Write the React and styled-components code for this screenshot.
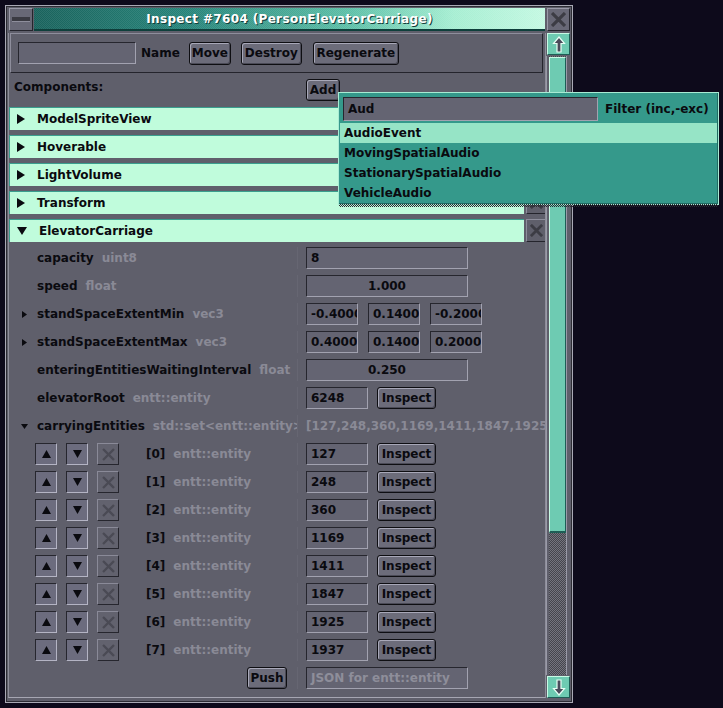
import React from 'react';
import styled, { createGlobalStyle } from 'styled-components';

const Global = createGlobalStyle`
  html, body { margin: 0; padding: 0; background: #0d0a1b; }
  body {
    font-family: "DejaVu Sans", "Liberation Sans", sans-serif;
    font-weight: bold;
    font-size: 12px;
    color: #0a0a0f;
  }
  * { box-sizing: border-box; }
`;

const Page = styled.div`
  position: relative;
  width: 723px;
  height: 708px;
  padding: 5px 0 0 5px;
`;

const Window = styled.div`
  width: 568px;
  height: 698px;
  background: #5f5f6b;
  border: 1px solid #a9a9b5;
  box-shadow: inset 0 0 0 1px #2c2c34;
  padding: 2px 2px 0 2px;
  display: flex;
  flex-direction: column;
`;

const TitleRow = styled.div`
  display: flex;
  height: 23px;
  margin-left: 1px;
`;

const FrameButton = styled.div`
  flex: 0 0 ${p => p.$w}px;
  margin-left: ${p => p.$ml || 0}px;
  height: 23px;
  background: #686876;
  border: 1px solid;
  border-color: #9a9aa8 #24242c #24242c #9a9aa8;
  display: flex;
  align-items: center;
  justify-content: center;
`;

const TitleBar = styled.div`
  flex: 0 0 511px;
  margin-left: 1px;
  height: 23px;
  display: flex;
  align-items: center;
  justify-content: center;
  color: #ffffff;
  letter-spacing: 0.35px;
  border-bottom: 2px solid #0e3f3b;
  text-shadow: 1px 1px 0 #123f3b;
  background:
    repeating-conic-gradient(rgba(255,255,255,0.08) 0 25%, transparent 0 50%) 0 0 / 2px 2px,
    linear-gradient(90deg, #19625c 0%, #27847a 30%, #5ec0a8 62%, #a6eed2 82%, #c4f8e2 100%);
`;

const Body = styled.div`
  display: flex;
  height: 665px;
  margin-top: 2px;
`;

const Main = styled.div`
  width: 538px;
  height: 665px;
  border-left: 1px solid #8e8e9a;
  border-right: 1px solid #8e8e9a;
  border-bottom: 1px solid #a6a6b2;
  overflow: hidden;
  display: flex;
  flex-direction: column;
`;

const Toolbar = styled.div`
  margin: 0 2px 0 1px;
  height: 40px;
  flex: 0 0 40px;
  display: flex;
  align-items: center;
  padding: 0 7px;
  border: 1px solid;
  border-color: #8e8e9c #24242c #24242c #8e8e9c;
`;

const TextInput = styled.div`
  flex: 0 0 ${p => p.$w}px;
  width: ${p => p.$w}px;
  height: ${p => p.$h || 22}px;
  background: #646472;
  border: 1px solid;
  border-color: #26262e #a2a2b0 #a2a2b0 #26262e;
  padding: 0 4px;
  line-height: ${p => (p.$h || 22) - 2}px;
  text-align: ${p => p.$align || 'left'};
  color: ${p => (p.$placeholder ? '#8e8e9a' : '#0a0a0f')};
  white-space: nowrap;
  overflow: hidden;
`;

const Label = styled.span`
  margin: 0 ${p => p.$mr || 0}px 0 ${p => p.$ml || 0}px;
  white-space: nowrap;
`;

const Button = styled.div`
  flex: 0 0 ${p => p.$w}px;
  width: ${p => p.$w}px;
  height: ${p => p.$h || 23}px;
  margin-left: ${p => p.$ml || 0}px;
  background: #6c6c7a;
  border: 1px solid #0e0e12;
  border-radius: 3px;
  box-shadow: inset 1px 1px 0 #a8a8b8, inset -1px -1px 0 #4a4a56;
  display: flex;
  align-items: center;
  justify-content: center;
  white-space: nowrap;
`;

const ComponentsRow = styled.div`
  display: grid;
  grid-template-columns: 297px auto;
  height: 34px;
  flex: 0 0 34px;
  padding-top: 6px;
  align-items: start;
`;

const SectionLabel = styled.div`
  padding-left: 5px;
  line-height: 16px;
`;

const ComponentList = styled.div`
  display: flex;
  flex-direction: column;
  gap: 5px;
`;

const CompRow = styled.div`
  display: flex;
  gap: 2px;
  height: 23px;
`;

const CompHeader = styled.div`
  flex: 0 0 515px;
  height: 23px;
  background: #c0fcdc;
  border-top: 1px solid #3a9e8e;
  border-left: 1px solid #3a9e8e;
  display: flex;
  align-items: center;
  padding-left: 7px;
  gap: 12px;
`;

const RemoveButton = styled.div`
  flex: 0 0 20px;
  height: 23px;
  background: #5f5f6b;
  border: 1px solid;
  border-color: #8e8e9c #24242c #24242c #8e8e9c;
  display: flex;
  align-items: center;
  justify-content: center;
`;

const Fields = styled.div`
  display: flex;
  flex-direction: column;
  gap: 6px;
`;

const FieldRow = styled.div`
  display: grid;
  grid-template-columns: 289px 1fr;
  height: 22px;
`;

const LabelCell = styled.div`
  display: flex;
  align-items: center;
  overflow: hidden;
  white-space: nowrap;
  padding-left: ${p => p.$pl || 0}px;
  padding-right: ${p => p.$pr || 0}px;
  justify-content: ${p => p.$end ? 'flex-end' : 'flex-start'};
  border-right: 1px solid #666672;
  height: 22px;
`;

const CaretSlot = styled.div`
  flex: 0 0 28px;
  display: flex;
  justify-content: flex-end;
  padding-right: ${p => p.$down ? 9 : 10}px;
`;

const TypeName = styled.span`
  color: #8a8a96;
  margin-left: ${p => p.$ml ?? 8}px;
`;

const ValueCell = styled.div`
  display: flex;
  align-items: center;
  gap: ${p => p.$gap ?? 10}px;
  padding-left: 8px;
  white-space: nowrap;
  overflow: hidden;
`;

const GrayText = styled.span`
  color: #8a8a96;
`;

const SmallButton = styled.div`
  flex: 0 0 22px;
  height: 22px;
  background: ${p => p.$disabled ? '#62626e' : '#6c6c7e'};
  border: 1px solid;
  border-color: ${p => p.$disabled
    ? '#8a8a98 #26262e #26262e #8a8a98'
    : '#26262e #b4b4c4 #b4b4c4 #26262e'};
  display: flex;
  align-items: center;
  justify-content: center;
`;

const EntityButtons = styled.div`
  display: flex;
  gap: 9px;
  margin-right: 27px;
`;

const Scroll = styled.div`
  width: 24px;
  display: flex;
  flex-direction: column;
`;

const ScrollButton = styled.div`
  height: 22px;
  flex: 0 0 22px;
  width: 23px;
  margin-left: 1px;
  background: #6ecbb2;
  border: 1px solid;
  border-color: #c8fae4 #1e5e56 #1e5e56 #c8fae4;
  display: flex;
  align-items: center;
  justify-content: center;
`;

const Track = styled.div`
  flex: 1;
  margin: 1px 0;
  display: flex;
  padding-left: 2px;
  border-left: 1px solid #9a9aa8;
`;

const Rail = styled.div`
  width: 18px;
  border-right: 1px solid #9a9aa8;
  background: repeating-conic-gradient(#74747e 0 25%, #45454d 0 50%) 0 0 / 2px 2px;
  display: flex;
  flex-direction: column;
`;

const Thumb = styled.div`
  height: 476px;
  margin-top: 1px;
  width: 17px;
  background: #6ecbb2;
  border: 1px solid;
  border-color: #c8fae4 #1e5e56 #1e5e56 #c8fae4;
  border-bottom-width: 2px;
`;

const Dropdown = styled.div`
  position: absolute;
  left: 338px;
  top: 92px;
  width: 381px;
  height: 113px;
  background: #35998b;
  border: 1px solid #a8ecd4;
  box-shadow: inset -1px -1px 0 #1f6b62;
  padding: 4px 1px 0 1px;
  &::after {
    content: '';
    position: absolute;
    left: 0;
    top: 100%;
    width: 100%;
    height: 3px;
    background: repeating-conic-gradient(#2a2a32 0 25%, transparent 0 50%) 0 0 / 2px 2px;
  }
`;

const SearchRow = styled.div`
  display: flex;
  align-items: center;
  padding-left: 3px;
  height: 24px;
`;

const FilterLabel = styled.span`
  margin-left: 7px;
  white-space: nowrap;
`;

const OptionList = styled.div`
  margin-top: 2px;
  display: flex;
  flex-direction: column;
`;

const Option = styled.div`
  height: 20px;
  line-height: 20px;
  padding-left: 4px;
  background: ${p => p.$active ? '#96e4c6' : 'transparent'};
`;

const TriRight = () => (
  <svg width="8" height="10" viewBox="0 0 8 10"><path d="M0 0 L8 5 L0 10Z" fill="#0a0a0f" /></svg>
);
const TriDown = () => (
  <svg width="10" height="8" viewBox="0 0 10 8"><path d="M0 0 H10 L5 8Z" fill="#0a0a0f" /></svg>
);
const CaretRight = () => (
  <svg width="5" height="7" viewBox="0 0 5 7"><path d="M0 0 L5 3.5 L0 7Z" fill="#0a0a0f" /></svg>
);
const CaretDown = () => (
  <svg width="7" height="5" viewBox="0 0 7 5"><path d="M0 0 H7 L3.5 5Z" fill="#0a0a0f" /></svg>
);
const ArrowTri = ({ down }) => (
  <svg width="9" height="8" viewBox="0 0 9 8">
    <path d={down ? 'M0 0 H9 L4.5 8Z' : 'M4.5 0 L9 8 H0Z'} fill="#0a0a0f" />
  </svg>
);
const XIcon = ({ size = 14, color = '#3c3c44', w = 3 }) => (
  <svg width={size} height={size} viewBox="0 0 14 14">
    <path d="M2 2 L12 12 M12 2 L2 12" stroke={color} strokeWidth={w} strokeLinecap="square" />
  </svg>
);
const BigArrow = ({ down }) => (
  <svg width="14" height="17" viewBox="0 0 14 17">
    <path
      d={down
        ? 'M7 16 L12.5 9.5 H9 V1 H5 V9.5 H1.5Z'
        : 'M7 1 L12.5 7.5 H9 V16 H5 V7.5 H1.5Z'}
      fill="#4a4a5a" stroke="#e6fff4" strokeWidth="1.2" strokeLinejoin="miter"
    />
  </svg>
);
const Dash = () => (
  <svg width="18" height="6" viewBox="0 0 18 6">
    <rect x="0" y="0" width="18" height="4" fill="#3a3a42" />
    <rect x="0" y="4" width="18" height="1" fill="#8e8e9c" />
  </svg>
);

const components = ['ModelSpriteView', 'Hoverable', 'LightVolume', 'Transform'];
const entities = [127, 248, 360, 1169, 1411, 1847, 1925, 1937];

const Field = ({ label, type, caret, children }) => (
  <FieldRow>
    <LabelCell>
      <CaretSlot $down={caret === 'down'}>
        {caret === 'right' && <CaretRight />}
        {caret === 'down' && <CaretDown />}
      </CaretSlot>
      <span>{label}</span>
      <TypeName>{type}</TypeName>
    </LabelCell>
    <ValueCell>{children}</ValueCell>
  </FieldRow>
);

export default function App() {
  return (
    <Page>
      <Global />
      <Window>
        <TitleRow>
          <FrameButton $w={24}><Dash /></FrameButton>
          <TitleBar>Inspect #7604 (PersonElevatorCarriage)</TitleBar>
          <FrameButton $w={23} $ml={2}><XIcon size={15} /></FrameButton>
        </TitleRow>
        <Body>
          <Main>
            <Toolbar>
              <TextInput $w={118} />
              <Label $ml={5} $mr={9}>Name</Label>
              <Button $w={42}>Move</Button>
              <Button $w={61} $ml={10}>Destroy</Button>
              <Button $w={86} $ml={11}>Regenerate</Button>
            </Toolbar>
            <ComponentsRow>
              <SectionLabel>Components:</SectionLabel>
              <Button $w={34} $h={22}>Add</Button>
            </ComponentsRow>
            <ComponentList>
              {components.map(c => (
                <CompRow key={c}>
                  <CompHeader><TriRight /><span>{c}</span></CompHeader>
                  <RemoveButton><XIcon size={13} /></RemoveButton>
                </CompRow>
              ))}
              <CompRow>
                <CompHeader><TriDown /><span>ElevatorCarriage</span></CompHeader>
                <RemoveButton><XIcon size={13} /></RemoveButton>
              </CompRow>
              <Fields>
                <Field label="capacity" type="uint8">
                  <TextInput $w={162}>8</TextInput>
                </Field>
                <Field label="speed" type="float">
                  <TextInput $w={162} $align="center">1.000</TextInput>
                </Field>
                <Field label="standSpaceExtentMin" type="vec3" caret="right">
                  <TextInput $w={52}>-0.4000</TextInput>
                  <TextInput $w={52}>0.1400</TextInput>
                  <TextInput $w={52}>-0.2000</TextInput>
                </Field>
                <Field label="standSpaceExtentMax" type="vec3" caret="right">
                  <TextInput $w={52}>0.4000</TextInput>
                  <TextInput $w={52}>0.1400</TextInput>
                  <TextInput $w={52}>0.2000</TextInput>
                </Field>
                <Field label="enteringEntitiesWaitingInterval" type="float">
                  <TextInput $w={162} $align="center">0.250</TextInput>
                </Field>
                <Field label="elevatorRoot" type="entt::entity">
                  <TextInput $w={62}>6248</TextInput>
                  <Button $w={59} $h={22} $ml={-1}>Inspect</Button>
                </Field>
                <Field label="carryingEntities" type="std::set<entt::entity>" caret="down">
                  <GrayText>[{entities.join(',')}]</GrayText>
                </Field>
                {entities.map((e, i) => (
                  <FieldRow key={e}>
                    <LabelCell $pl={26}>
                      <EntityButtons>
                        <SmallButton><ArrowTri /></SmallButton>
                        <SmallButton><ArrowTri down /></SmallButton>
                        <SmallButton $disabled><XIcon size={13} color="#4a4a54" w={2.5} /></SmallButton>
                      </EntityButtons>
                      <span>[{i}]</span>
                      <TypeName>entt::entity</TypeName>
                    </LabelCell>
                    <ValueCell>
                      <TextInput $w={62}>{e}</TextInput>
                      <Button $w={59} $h={22} $ml={-1}>Inspect</Button>
                    </ValueCell>
                  </FieldRow>
                ))}
                <FieldRow>
                  <LabelCell $end $pr={10}>
                    <Button $w={40} $h={22}>Push</Button>
                  </LabelCell>
                  <ValueCell>
                    <TextInput $w={162} $placeholder>JSON for entt::entity</TextInput>
                  </ValueCell>
                </FieldRow>
              </Fields>
            </ComponentList>
          </Main>
          <Scroll>
            <ScrollButton><BigArrow /></ScrollButton>
            <Track>
              <Rail><Thumb /></Rail>
            </Track>
            <ScrollButton><BigArrow down /></ScrollButton>
          </Scroll>
        </Body>
      </Window>
      <Dropdown>
        <SearchRow>
          <TextInput $w={255} $h={24}>Aud</TextInput>
          <FilterLabel>Filter (inc,-exc)</FilterLabel>
        </SearchRow>
        <OptionList>
          <Option $active>AudioEvent</Option>
          <Option>MovingSpatialAudio</Option>
          <Option>StationarySpatialAudio</Option>
          <Option>VehicleAudio</Option>
        </OptionList>
      </Dropdown>
    </Page>
  );
}
